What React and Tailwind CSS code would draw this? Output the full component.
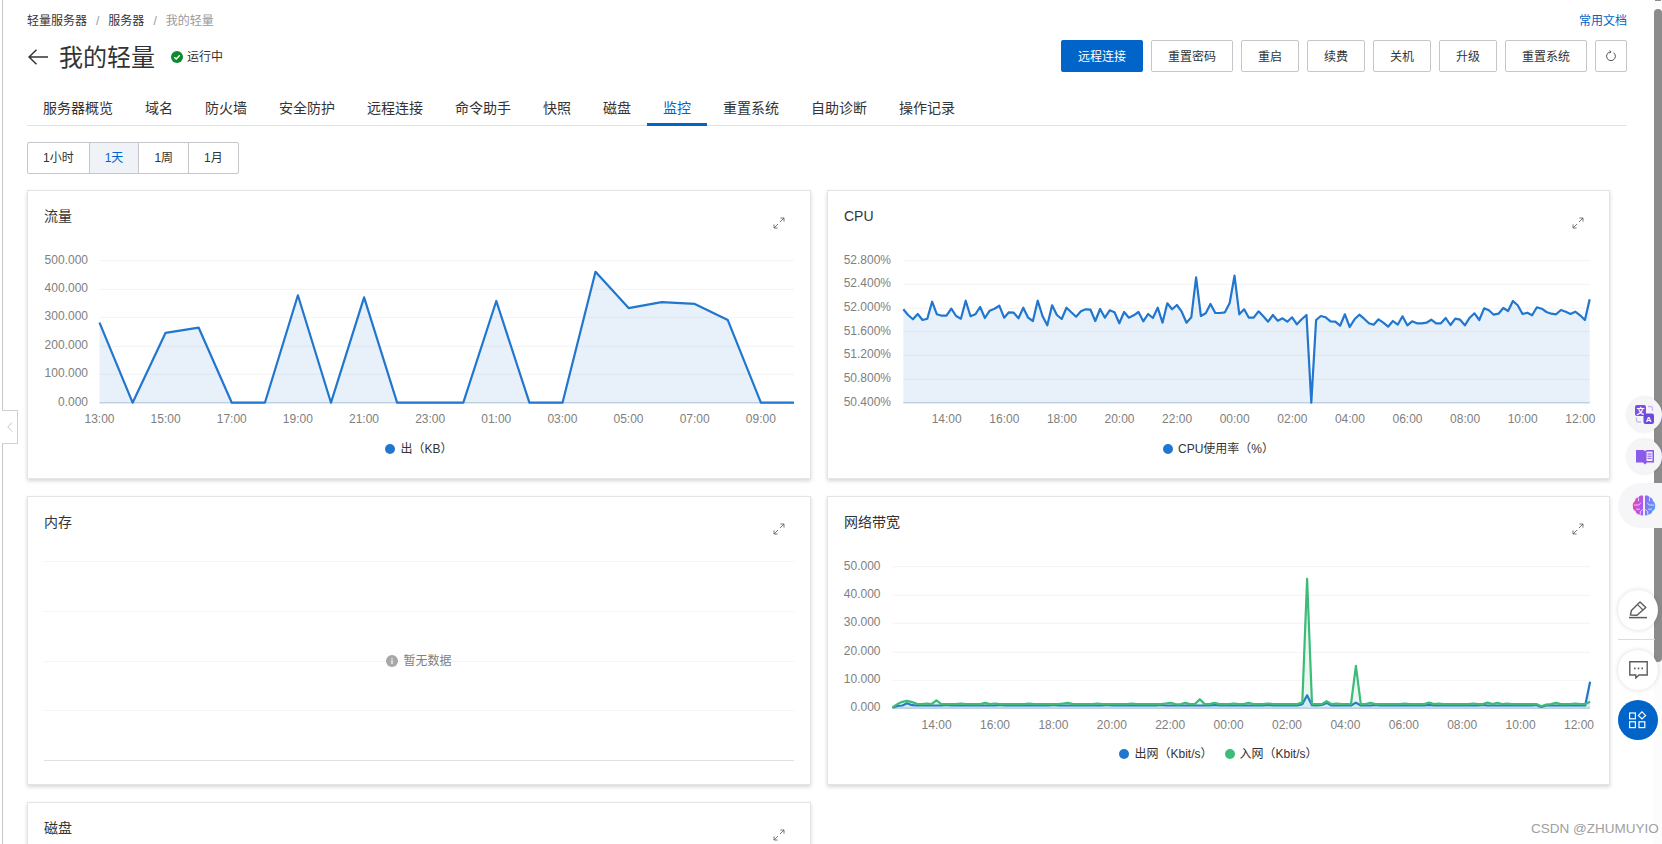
import React from 'react';

const LINE_BLUE = '#2176ce';
const LINE_GREEN = '#3cbb79';

const tabs = ['服务器概览', '域名', '防火墙', '安全防护', '远程连接', '命令助手', '快照', '磁盘', '监控', '重置系统', '自助诊断', '操作记录'];
const actions = ['重置密码', '重启', '续费', '关机', '升级', '重置系统'];
const ranges = ['1小时', '1天', '1周', '1月'];

// hourly samples of the traffic chart
const flowData = [282, 0, 246, 264, 0, 0, 378, 0, 371, 0, 0, 0, 358, 0, 0, 461, 333, 354, 348, 291, 0, 0];

// cpu line, read off as pixel rows from the top of the screenshot
const cpuRows = [388, 405, 418, 402, 420, 416, 365, 403, 407, 407, 386, 408, 416, 362, 409, 403, 381, 414, 392, 386, 377, 413, 397, 398, 415, 383, 413, 423, 362, 408, 436, 376, 405, 417, 383, 397, 410, 394, 388, 389, 423, 387, 413, 391, 397, 430, 396, 413, 406, 396, 424, 402, 414, 383, 428, 370, 388, 375, 395, 428, 412, 292, 408, 400, 372, 399, 399, 397, 369, 287, 403, 388, 413, 413, 394, 409, 425, 405, 422, 415, 425, 412, 433, 418, 405, 668, 420, 408, 412, 424, 425, 437, 403, 441, 418, 404, 416, 430, 434, 418, 428, 440, 423, 434, 409, 436, 424, 430, 430, 428, 419, 430, 430, 414, 435, 416, 419, 436, 413, 400, 420, 385, 391, 404, 401, 384, 393, 363, 376, 402, 398, 406, 382, 386, 396, 401, 403, 390, 395, 402, 395, 406, 420, 358];

const netIn = Array.from({ length: 144 }, (_, i) => 1.5 + (i % 7 === 0 ? 0.2 : 0));
Object.assign(netIn, { 0: 0.3, 1: 1.5, 2: 2.3, 3: 2.6, 4: 2.2, 5: 1.6, 9: 2.8, 19: 1.9, 36: 1.9, 57: 1.9, 59: 1.4, 60: 1.9, 63: 3.2, 66: 1.9, 73: 1.9, 84: 2.1, 85: 45.7, 86: 1.6, 89: 2.5, 94: 1.5, 95: 15, 96: 1.5, 98: 1.9, 110: 2, 122: 2, 124: 1.9, 133: 0.7, 134: 1.3, 136: 1.9, 142: 1.5, 143: 2.3 });

const netOut = Array.from({ length: 144 }, (_, i) => 1 + (i % 11 === 0 ? 0.2 : 0));
Object.assign(netOut, { 0: 0.2, 1: 0.8, 2: 1, 3: 1.8, 4: 1.1, 84: 1.5, 85: 4.6, 86: 1.1, 89: 1.9, 95: 2, 96: 1, 133: 0.5, 142: 1, 143: 9.4 });

const toPoints = (xs, ys) => xs.map((x, i) => `${x.toFixed(1)},${ys[i].toFixed(1)}`).join(' ');

const Series = ({ xs, ys, base, color }) => (
    <>
        <polygon points={`${xs[0]},${base} ${toPoints(xs, ys)} ${xs[xs.length - 1]},${base}`} fill={color} fillOpacity="0.1" />
        <polyline points={toPoints(xs, ys)} fill="none" stroke={color} strokeWidth="2.2" strokeLinejoin="round" />
    </>
);

const Axes = ({ left, right, yTicks, xTicks, labelX, labelY }) => (
    <g fontSize="12" fill="#808080">
        {yTicks.map(([label, y], i) => (
            <g key={label}>
                <line x1={left} x2={right} y1={y} y2={y} stroke={i === yTicks.length - 1 ? '#ccd6e4' : '#f3f3f3'} strokeWidth={i === yTicks.length - 1 ? 1.5 : 1} />
                <text x={labelX} y={y + 3} textAnchor="end">{label}</text>
            </g>
        ))}
        {xTicks.map(([label, x]) => (
            <text key={label} x={x} y={labelY} textAnchor="middle">{label}</text>
        ))}
    </g>
);

const ExpandIcon = () => (
    <svg width="12" height="12" viewBox="0 0 12 12" fill="none" strokeWidth="0.8" stroke="#555" className="shrink-0">
        <path d="M1 11 5 7M1 7.4V11H4.6" />
        <path d="M11 1 7 5M7.4 1H11V4.6" />
    </svg>
);

const Legend = ({ items }) => (
    <div className="flex h-[20px] items-center justify-center gap-[12px] text-xs text-[#333]">
        {items.map(([label, color]) => (
            <div key={label} className="flex items-center gap-[5px]">
                <svg width="10" height="10" viewBox="0 0 10 10"><circle cx="5" cy="5" r="5" fill={color} /></svg>
                <span>{label}</span>
            </div>
        ))}
    </div>
);

const Card = ({ title, children }) => (
    <div className="h-[289px] border border-[#e4e4e4] bg-white shadow-[0_2px_4px_rgba(0,0,0,0.16)]">
        <div className="flex h-[50px] items-start justify-between pl-[16px] pr-[25px] pt-[15px]">
            <span className="text-sm leading-5 text-[#333]">{title}</span>
            <div className="mt-[11px]"><ExpandIcon /></div>
        </div>
        {children}
    </div>
);

const FlowChart = () => {
    const xs = flowData.map((_, i) => 99.5 + i * 33.07);
    const ys = flowData.map((v) => 402.7 - (v / 500) * 142);
    const yTicks = [['500.000', 260.7], ['400.000', 289.3], ['300.000', 317.3], ['200.000', 346.3], ['100.000', 374.3], ['0.000', 402.7]];
    const xTicks = ['13:00', '15:00', '17:00', '19:00', '21:00', '23:00', '01:00', '03:00', '05:00', '07:00', '09:00'].map((t, i) => [t, 99.5 + i * 66.13]);
    return (
        <svg width="782" height="198" viewBox="28 241 782 198" className="block">
            <Axes left={99.5} right={794} yTicks={yTicks} xTicks={xTicks} labelX={88} labelY={423} />
            <Series xs={xs} ys={ys} base={402.7} color={LINE_BLUE} />
        </svg>
    );
};

const CpuChart = () => {
    const xs = cpuRows.map((_, i) => 903.3 + i * 4.8);
    const ys = cpuRows.map((r) => 180 + r / 3);
    const yTicks = [['52.800%', 260.7], ['52.400%', 284.3], ['52.000%', 308.3], ['51.600%', 331.7], ['51.200%', 355.3], ['50.800%', 379.3], ['50.400%', 402.7]];
    const xTicks = ['14:00', '16:00', '18:00', '20:00', '22:00', '00:00', '02:00', '04:00', '06:00', '08:00', '10:00', '12:00'].map((t, i) => [t, 946.7 + i * 57.6]);
    return (
        <svg width="781" height="198" viewBox="828 241 781 198" className="block">
            <Axes left={903.3} right={1589.7} yTicks={yTicks} xTicks={xTicks} labelX={891} labelY={423} />
            <Series xs={xs} ys={ys} base={402.7} color={LINE_BLUE} />
        </svg>
    );
};

const NetChart = () => {
    const xs = netIn.map((_, i) => 892.5 + i * 4.878);
    const toY = (v) => 708.3 - (v / 50) * 141.6;
    const yTicks = [['50.000', 566.7], ['40.000', 595.3], ['30.000', 623.3], ['20.000', 652.3], ['10.000', 680.3], ['0.000', 708.3]];
    const xTicks = ['14:00', '16:00', '18:00', '20:00', '22:00', '00:00', '02:00', '04:00', '06:00', '08:00', '10:00', '12:00'].map((t, i) => [t, 936.6 + i * 58.4]);
    return (
        <svg width="781" height="197" viewBox="828 547 781 197" className="block">
            <Axes left={892.5} right={1590} yTicks={yTicks} xTicks={xTicks} labelX={880.5} labelY={729} />
            <Series xs={xs} ys={netOut.map(toY)} base={708.3} color={LINE_BLUE} />
            <Series xs={xs} ys={netIn.map(toY)} base={708.3} color={LINE_GREEN} />
        </svg>
    );
};

const EmptyChart = () => (
    <div className="relative mx-[16px] h-[214px]">
        <div className="flex h-[214px] flex-col justify-between pt-[14px]">
            <div className="h-px bg-[#f5f5f5]" />
            <div className="h-px bg-[#f5f5f5]" />
            <div className="h-px bg-[#f5f5f5]" />
            <div className="h-px bg-[#f5f5f5]" />
            <div className="h-px bg-[#e0e0e0]" />
        </div>
        <div className="absolute left-0 right-0 top-[106px] flex items-center justify-center gap-[5px] text-xs text-[#808080]">
            <svg width="12" height="12" viewBox="0 0 12 12">
                <circle cx="6" cy="6" r="6" fill="#a8a8a8" />
                <path d="M6 5.2V9M6 3V4.2" stroke="#fff" strokeWidth="1.2" />
            </svg>
            <span>暂无数据</span>
        </div>
    </div>
);

const TranslateIcon = () => (
    <svg width="19" height="19" viewBox="0 0 19 19">
        <path d="M13 1.5h2.5a2 2 0 0 1 2 2V6M1.5 12.5V15a2 2 0 0 0 2 2H6" fill="none" stroke="#c9b8f5" strokeWidth="1.3" />
        <rect x="0" y="0" width="11" height="11" rx="2" fill="#7a4fe2" />
        <text x="5.5" y="8.5" fontSize="8" fontWeight="700" fill="#fff" textAnchor="middle">文</text>
        <rect x="8.5" y="8.5" width="10.5" height="10.5" rx="2" fill="#6b49dc" />
        <text x="13.7" y="17" fontSize="8" fontWeight="700" fill="#fff" textAnchor="middle">A</text>
    </svg>
);

const BookIcon = () => (
    <svg width="18" height="16" viewBox="0 0 18 16">
        <path d="M0 1h7.2L9 2l1.8-1H18v12.5h-7L9 15.5 7 13.5H0Z" fill="#8a5ae8" />
        <path d="M10.5 2.6H16.5V12H10.5Z" fill="#efe9fd" />
        <path d="M11.5 5H15.5M11.5 7.2H15.5M11.5 9.4H15.5" stroke="#8a5ae8" strokeWidth="1" />
    </svg>
);

const BrainIcon = () => (
    <svg width="24" height="23" viewBox="0 0 26 24">
        <defs>
            <linearGradient id="brainLeft" x1="0" y1="0" x2="1" y2="0.3">
                <stop offset="0" stopColor="#f53fb0" />
                <stop offset="1" stopColor="#a55cf2" />
            </linearGradient>
            <linearGradient id="brainRight" x1="0" y1="0" x2="1" y2="0.5">
                <stop offset="0" stopColor="#9266f4" />
                <stop offset="1" stopColor="#5a9bf8" />
            </linearGradient>
        </defs>
        <path d="M12 1.5C9.8.8 8 1.5 7 3.2 4.6 3.2 3.2 5 3.4 7.2 1.2 8.6.4 11 1 13.4c-.2 2.2 1 4 2.8 4.6.4 2.4 2.2 3.8 4.4 3.8 1.2 1 2.6 1.2 3.8.7Z" fill="url(#brainLeft)" />
        <path d="M14 1.5C16.2.8 18 1.5 19 3.2c2.4 0 3.8 1.8 3.6 4 2.2 1.4 3 3.8 2.4 6.2.2 2.2-1 4-2.8 4.6-.4 2.4-2.2 3.8-4.4 3.8-1.2 1-2.6 1.2-3.8.7Z" fill="url(#brainRight)" />
        <path d="M2 11.5H7.5L9.5 9M7 4V7.5M4.5 16H8.5M9 22V18.5L11.5 16.5M24 11.5H18.5L16.5 9M19 4V7.5M21.5 16H17.5M17 22V18.5L14.5 16.5" fill="none" stroke="#fff" strokeOpacity="0.85" strokeWidth="0.9" />
    </svg>
);

const PenIcon = () => (
    <svg width="18" height="18" viewBox="0 0 18 18" fill="none" stroke="#5c5c5c" strokeWidth="1.4">
        <path d="M1.4 14 2.4 9.5 11 .9 16.8 6.5 8 14.2Z" strokeLinejoin="round" />
        <path d="M8.6 3.6 14 9" strokeWidth="1.1" />
        <path d="M0 16.6H18" strokeWidth="1.5" />
    </svg>
);

const ChatIcon = () => (
    <svg width="19" height="18" viewBox="0 0 19 18" fill="none">
        <path d="M.8.8H18.2V14H10L6.8 17V14H.8Z" stroke="#5c5c5c" strokeWidth="1.4" />
        <path d="M5 7.4H6.6M8.7 7.4H10.3M12.4 7.4H14" stroke="#5c5c5c" strokeWidth="1.6" />
    </svg>
);

const AppsIcon = () => (
    <svg width="18" height="18" viewBox="0 0 18 18" fill="none" stroke="#fff" strokeWidth="1.2">
        <rect x="0.6" y="2" width="5.8" height="5.8" />
        <rect x="0.6" y="10.8" width="5.8" height="5.8" />
        <rect x="10" y="10.8" width="5.8" height="5.8" />
        <path d="M13 .8 16.6 4.4 13 8 9.4 4.4Z" />
    </svg>
);

export default function App() {
    return (
        <div className="relative h-[844px] w-full overflow-hidden bg-white font-['Liberation_Sans','Noto_Sans_CJK_SC',sans-serif] text-[#333]">
            <div className="ml-[2px] h-[844px] border-l border-[#c8c8c8] pl-[24px] pr-[35px]">
                {/* breadcrumb */}
                <div className="flex h-[31px] items-end justify-between text-xs leading-5">
                    <div className="flex">
                        <span>轻量服务器</span>
                        <span className="mx-[9px] text-[#999]">/</span>
                        <span>服务器</span>
                        <span className="mx-[9px] text-[#999]">/</span>
                        <span className="text-[#999]">我的轻量</span>
                    </div>
                    <span className="text-[#0064c8]">常用文档</span>
                </div>

                {/* title + actions */}
                <div className="mt-[9px] flex h-[32px] items-center justify-between">
                    <div className="flex items-center pl-px pt-[2px]">
                        <svg width="20" height="16" viewBox="0 0 20 16" fill="none" stroke="#333" strokeWidth="1.5">
                            <path d="M20 8H1M8.5 .8 1 8l7.5 7.2" />
                        </svg>
                        <span className="ml-[11px] pt-px text-2xl leading-8">我的轻量</span>
                        <svg width="12" height="12" viewBox="0 0 12 12" className="ml-[16px]">
                            <circle cx="6" cy="6" r="6" fill="#0c8a2e" />
                            <path d="M3.2 6.2 5.2 8 8.8 4.2" fill="none" stroke="#fff" strokeWidth="1.4" />
                        </svg>
                        <span className="ml-[4px] text-xs">运行中</span>
                    </div>
                    <div className="flex gap-[8px]">
                        <button className="h-[32px] rounded-[2px] bg-[#0064c8] px-[17px] pt-px text-xs text-white">远程连接</button>
                        {actions.map((a, i) => (
                            <button key={i} className="h-[32px] rounded-[2px] border border-[#c4c6cc] bg-white px-[16px] pt-px text-xs">{a}</button>
                        ))}
                        <button className="flex h-[32px] w-[32px] items-center justify-center rounded-[2px] border border-[#c4c6cc] bg-white">
                            <svg width="12" height="12" viewBox="0 0 12 12" fill="none" stroke="#555" strokeWidth="1">
                                <path d="M8.6 2.7A4.4 4.4 0 1 1 5.2 1.9" />
                                <path d="M4.6.5 6 1.9 4.6 3.3" />
                            </svg>
                        </button>
                    </div>
                </div>

                {/* tabs */}
                <div className="mt-[20px] flex h-[34px] border-b border-[#e3e3e3] text-sm">
                    {tabs.map((t) => (
                        <div key={t} className={t === '监控' ? 'flex h-[34px] items-center border-b-[3px] border-[#0064c8] px-[16px] text-[#0064c8]' : 'flex h-[34px] items-center px-[16px] pb-[3px]'}>
                            {t}
                        </div>
                    ))}
                </div>

                {/* time range */}
                <div className="mt-[16px] flex h-[32px] w-fit rounded-[2px] border border-[#c4c6cc] text-xs">
                    {ranges.map((r, i) => (
                        <div key={r} className={`flex items-center px-[15px] ${i > 0 ? 'border-l border-[#c4c6cc]' : ''} ${r === '1天' ? 'bg-[#eff3f8] text-[#0064c8]' : ''}`}>
                            {r}
                        </div>
                    ))}
                </div>

                {/* chart cards */}
                <div className="mt-[16px] grid grid-cols-[784px_783px] gap-x-[16px] gap-y-[17px]">
                    <Card title="流量">
                        <FlowChart />
                        <Legend items={[['出（KB）', LINE_BLUE]]} />
                    </Card>
                    <Card title="CPU">
                        <CpuChart />
                        <Legend items={[['CPU使用率（%）', LINE_BLUE]]} />
                    </Card>
                    <Card title="内存">
                        <EmptyChart />
                    </Card>
                    <Card title="网络带宽">
                        <NetChart />
                        <Legend items={[['出网（Kbit/s）', LINE_BLUE], ['入网（Kbit/s）', LINE_GREEN]]} />
                    </Card>
                    <Card title="磁盘" />
                </div>
            </div>

            {/* sidebar handle */}
            <div className="absolute left-[2px] top-[410px] flex h-[34px] w-[16px] items-center justify-center rounded-r-[1px] border border-l-0 border-[#d0d0d0] bg-white">
                <svg width="6" height="10" viewBox="0 0 6 10" fill="none" stroke="#c4c4c4">
                    <path d="M5 .5.8 5 5 9.5" />
                </svg>
            </div>

            {/* scrollbar */}
            <div className="absolute bottom-0 right-0 top-0 w-[8px] bg-[#fcfcfc]">
                <div className="mx-auto h-px w-[6px] bg-[#8c8c8c]" />
                <div className="mt-[8px] h-[653px] rounded-[4px] bg-[#8c8c8c]" />
            </div>

            {/* floating tools */}
            <div className="absolute left-[1627px] top-[397px] flex h-[35px] w-[35px] items-center justify-center rounded-full bg-[#f5f5f8] shadow-[0_0_3px_rgba(0,0,0,0.12)]"><TranslateIcon /></div>
            <div className="absolute left-[1627px] top-[439px] flex h-[35px] w-[35px] items-center justify-center rounded-full bg-[#f5f5f8] shadow-[0_0_3px_rgba(0,0,0,0.12)]"><BookIcon /></div>
            <div className="absolute left-[1618px] top-[483px] flex h-[45px] w-[44px] items-center rounded-l-full bg-[#f6f6f8] pl-[14px]"><BrainIcon /></div>
            <div className="absolute left-[1618px] top-[590px] flex h-[40px] w-[40px] items-center justify-center rounded-full bg-white shadow-[0_0_5px_rgba(0,0,0,0.15)]"><PenIcon /></div>
            <div className="absolute left-[1618px] top-[639px] h-px w-[37px] bg-[#dcdcdc]" />
            <div className="absolute left-[1618px] top-[650px] flex h-[40px] w-[40px] items-center justify-center rounded-full bg-white shadow-[0_0_5px_rgba(0,0,0,0.15)]"><ChatIcon /></div>
            <div className="absolute left-[1618px] top-[700px] flex h-[40px] w-[40px] items-center justify-center rounded-full bg-[#0064c8]"><AppsIcon /></div>

            <div className="absolute left-[1531px] top-[821px] text-[13.5px] leading-4 text-[#a0a0a0]">CSDN @ZHUMUYIO</div>
        </div>
    );
}
